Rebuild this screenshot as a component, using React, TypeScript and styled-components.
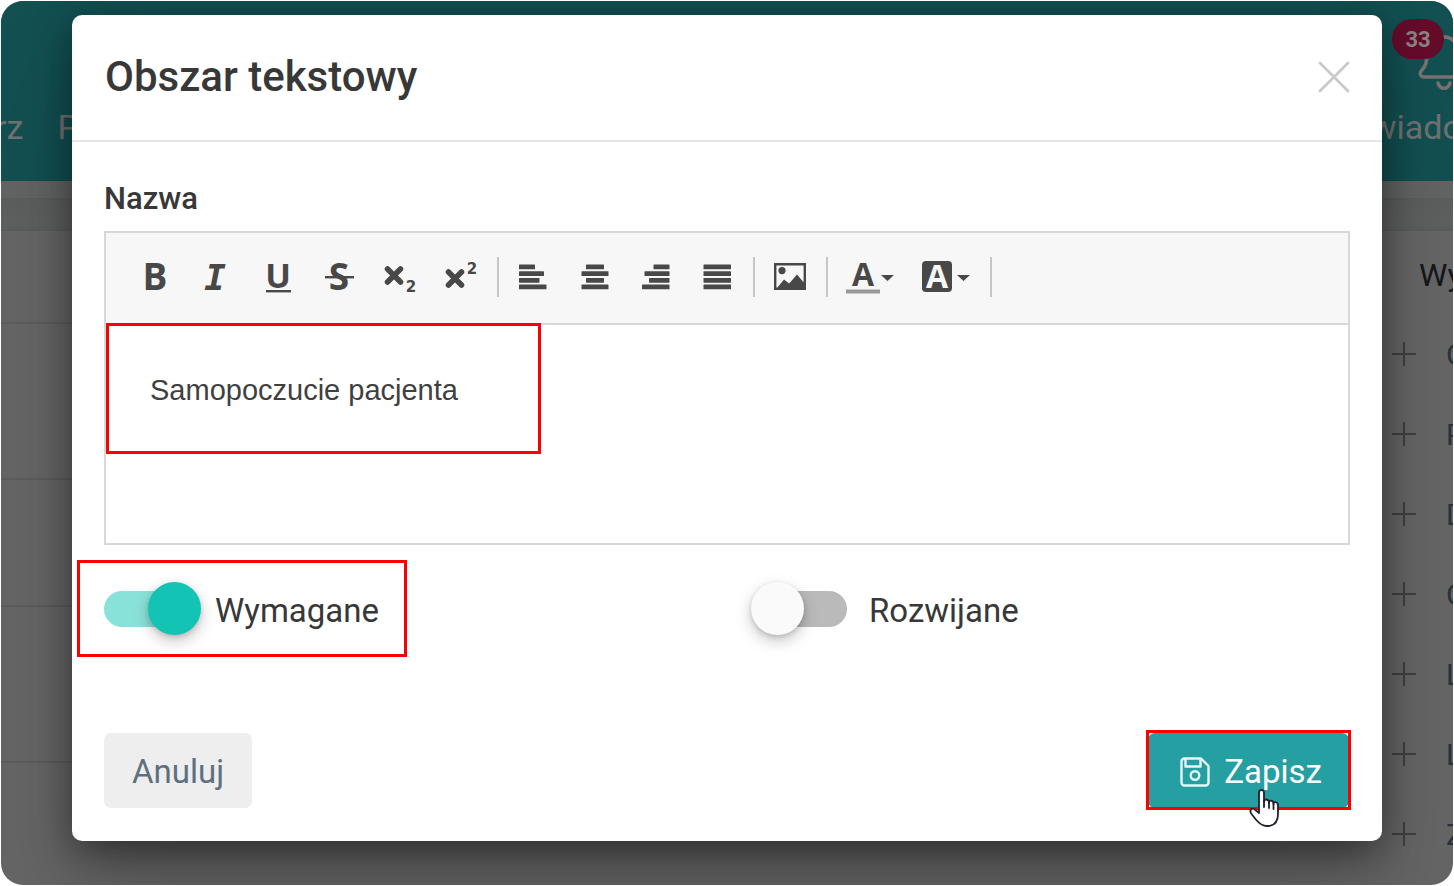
import React from "react";
import styled, { createGlobalStyle, css } from "styled-components";

const ui = `Roboto, "Noto Sans", sans-serif`;

const GlobalStyle = createGlobalStyle`
  *, *::before, *::after { box-sizing: border-box; }
  body { margin: 0; background: #fff; font-family: ${ui}; color: #383838; }
  h1, h2, ul, p { margin: 0; padding: 0; }
  button, textarea { font: inherit; color: inherit; }
`;

const Frame = styled.div`
  display: grid;
  grid-template-columns: minmax(0, 1fr);
  min-height: calc(100vh - 2px);
  margin: 1px;
  border-radius: 22px;
  overflow: hidden;
  background: #666;
`;

/* ---------- dimmed page under the dialog ---------- */

const Page = styled.div`
  grid-area: 1 / 1;
  display: flex;
  flex-direction: column;
  min-width: 0;
`;

const TopBar = styled.header`
  display: flex;
  justify-content: space-between;
  height: 180px;
  background: #135052;
  color: #707372;
  font-size: 34px;
  line-height: 40px;
  overflow: hidden;
`;

const Nav = styled.nav`
  display: flex;
  align-items: flex-end;
  gap: 34px;
  margin-left: -6px;
  padding-bottom: 34px;
`;

const NavLink = styled.a`
  color: inherit;
  text-decoration: none;
  white-space: nowrap;
`;

const Notifications = styled.div`
  display: flex;
  flex-direction: column;
  justify-content: flex-end;
  width: 82px;
  padding-bottom: 34px;
`;

const BellHolder = styled.div`
  position: relative;
  height: 73px;
  margin-bottom: 19px;
  padding-left: 47px;
  svg { display: block; }
`;

const Badge = styled.span`
  position: absolute;
  left: 21px;
  top: 4px;
  width: 52px;
  height: 40px;
  border-radius: 20px;
  background: #650c2b;
  color: #8c8084;
  font-size: 22px;
  font-weight: 700;
  line-height: 42px;
  text-align: center;
`;

const SubBar = styled.div`
  height: 50px;
  border-top: 17px solid #636565;
  background: linear-gradient(#5a5c5c, #5c5f5e 2px, #5e6160 28px, #5b5d5d);
`;

const Columns = styled.div`
  display: flex;
  justify-content: space-between;
  flex: 1;
`;

const Rows = styled.div`
  width: 200px;
`;

const Row = styled.div<{ $size: number }>`
  height: ${(p) => p.$size}px;
  border-bottom: 2px solid #5d5d5d;
`;

const Side = styled.aside`
  width: 61px;
  overflow: hidden;
  white-space: nowrap;
`;

const SideTitle = styled.h2`
  padding: 24px 0 19px 27px;
  font-size: 32px;
  font-weight: 400;
  line-height: 40px;
  color: #15171c;
`;

const SideItem = styled.li`
  display: flex;
  align-items: center;
  gap: 30px;
  height: 80px;
  list-style: none;
  font-size: 30px;
  color: #29313c;
  svg { flex: none; }
`;

/* ---------- dialog ---------- */

const Overlay = styled.div`
  grid-area: 1 / 1;
  z-index: 1;
  padding: 14px 71px 44px;
`;

const Dialog = styled.section`
  display: flex;
  flex-direction: column;
  height: 100%;
  border-radius: 10px;
  background: #fff;
  box-shadow:
    0 28px 40px -18px rgba(0, 0, 0, 0.2),
    0 62px 100px 8px rgba(0, 0, 0, 0.14),
    0 8px 36px 2px rgba(0, 0, 0, 0.34);
`;

const DialogHeader = styled.header`
  display: flex;
  align-items: center;
  justify-content: space-between;
  height: 127px;
  padding: 0 32px 2px 33px;
  border-bottom: 2px solid #e6e6e6;
`;

const Title = styled.h1`
  font-size: 42px;
  font-weight: 500;
  line-height: 50px;
`;

const CloseButton = styled.button`
  display: flex;
  padding: 0;
  border: 0;
  background: none;
`;

const Form = styled.form`
  display: flex;
  flex-direction: column;
  flex: 1;
  padding: 37px 32px 33px;
`;

const FieldLabel = styled.label`
  font-size: 31px;
  font-weight: 500;
  line-height: 40px;
  margin-bottom: 12px;
`;

const Editor = styled.div`
  border: 2px solid #d8d8d8;
`;

const Toolbar = styled.div`
  display: flex;
  align-items: center;
  height: 92px;
  padding: 0 0 2px 18px;
  background: #f7f7f7;
  border-bottom: 2px solid #d8d8d8;
`;

const Group = styled.div<{ $tool: number }>`
  display: flex;
  margin-right: 4px;
  button { width: ${(p) => p.$tool}px; }
`;

const Tool = styled.button`
  display: flex;
  justify-content: center;
  align-items: center;
  height: 48px;
  padding: 0;
  border: 0;
  background: none;
  svg { flex: none; fill: #484848; }
`;

const Divider = styled.span`
  width: 2px;
  height: 40px;
  margin: 0 3px;
  background: #c6c6c6;
`;

const outline = css`
  content: "";
  position: absolute;
  border: 3px solid #f00;
  pointer-events: none;
`;

const EditorBody = styled.div`
  position: relative;
  display: flex;
  &::before {
    ${outline}
    left: 0;
    top: -2px;
    width: 435px;
    height: 131px;
  }
`;

const TextArea = styled.textarea`
  flex: 1;
  height: 218px;
  padding: 43px 44px;
  border: 0;
  outline: 0;
  resize: none;
  background: none;
  color: #404040;
  font-family: "Liberation Sans", Arial, sans-serif;
  font-size: 29px;
  line-height: 44px;
`;

const Options = styled.div`
  display: grid;
  grid-template-columns: 1fr 1fr;
  column-gap: 52px;
  margin-top: 36px;
`;

const SwitchLabel = styled.label<{ $marked?: boolean; $gap: number }>`
  position: relative;
  display: flex;
  align-items: center;
  justify-self: start;
  gap: ${(p) => p.$gap}px;
  font-size: 33px;
  line-height: 56px;
  ${(p) =>
    p.$marked &&
    css`
      &::after {
        ${outline}
        inset: -21px -28px -20px -27px;
      }
    `}
`;

const SwitchText = styled.span`
  padding-top: 3px;
  line-height: 53px;
`;

const Switch = styled.input`
  appearance: none;
  position: relative;
  width: 94px;
  height: 36px;
  margin: 0;
  border-radius: 18px;
  background: #bababa;
  &::before {
    content: "";
    position: absolute;
    left: -2px;
    top: -9px;
    width: 53px;
    height: 53px;
    border-radius: 50%;
    background: #fafafa;
    box-shadow: 0 6px 16px rgba(0, 0, 0, 0.22), 0 2px 5px rgba(0, 0, 0, 0.14);
  }
  &:checked { background: #89e2d9; }
  &:checked::before { left: 44px; background: #13c4b5; }
`;

const Actions = styled.footer`
  display: flex;
  justify-content: space-between;
  margin-top: auto;
`;

const ActionButton = styled.button<{ $primary?: boolean }>`
  display: flex;
  align-items: center;
  justify-content: center;
  gap: 14px;
  height: 75px;
  padding: ${(p) => (p.$primary ? "2px 27px 0 32px" : "2px 28px 0")};
  border: 0;
  border-radius: 7px;
  background: ${(p) => (p.$primary ? "#269fa3" : "#eee")};
  color: ${(p) => (p.$primary ? "#fff" : "#5f7080")};
  font-size: 33px;
  line-height: 40px;
`;

const SaveHolder = styled.div`
  position: relative;
  padding-right: 1px;
  &::after {
    ${outline}
    inset: -3px -1px -2px -2px;
  }
`;

const Pointer = styled.svg`
  position: absolute;
  z-index: 1;
  right: 70px;
  top: 55px;
`;

/* ---------- toolbar drawings ---------- */

type GlyphProps = { size?: number; family?: string; italic?: boolean; y?: number; fill?: string; x?: number; children: string };

const Glyph = ({ size = 37, family = "Open Sans", italic, y = 33, x = 20, fill = "#484848", children }: GlyphProps) => (
  <text x={x} y={y} textAnchor="middle" fontFamily={`"${family}", sans-serif`} fontSize={size} fontWeight="700" fontStyle={italic ? "italic" : "normal"} fill={fill}>
    {children}
  </text>
);

const Icon = ({ w = 40, children }: { w?: number; children: React.ReactNode }) => (
  <svg width={w} height="40" viewBox={`0 0 ${w} 40`} aria-hidden="true">{children}</svg>
);

const Bars = ({ rows }: { rows: [number, number][] }) => (
  <Icon>
    {rows.map(([x, w], i) => (
      <rect key={i} x={x} y={[7.5, 14.2, 20.9, 27.5][i]} width={w} height="4.8" rx="0.6" />
    ))}
  </Icon>
);

const Cross = ({ y }: { y: number }) => (
  <path d={`M8.500 ${y}l13 13M21.500 ${y}l-13 13`} stroke="#484848" strokeWidth="5.500" strokeLinecap="round" />
);

const letters = [
  { name: "Pogrubienie", icon: <Icon><Glyph>B</Glyph></Icon> },
  { name: "Kursywa", icon: <Icon><Glyph family="DejaVu Sans Mono" italic size={36} x={19}>I</Glyph></Icon> },
  { name: "Podkreślenie", icon: <Icon><Glyph size={34} y={31} x={21}>U</Glyph><rect x="9" y="33" width="25" height="2.4" /></Icon> },
  { name: "Przekreślenie", icon: <Icon><Glyph size={37} x={21}>S</Glyph><rect x="7" y="19" width="29" height="2.4" /></Icon> },
  { name: "Indeks dolny", icon: <Icon><Cross y={12} /><Glyph family="DejaVu Sans" size={15} x={32} y={35}>2</Glyph></Icon> },
  { name: "Indeks górny", icon: <Icon><Cross y={15} /><Glyph family="DejaVu Sans" size={15} x={32} y={17}>2</Glyph></Icon> },
];

const aligns: { name: string; rows: [number, number][] }[] = [
  { name: "Wyrównaj do lewej", rows: [[6, 16], [6, 25], [6, 20.5], [6, 27.5]] },
  { name: "Wyśrodkuj", rows: [[12, 18], [7.5, 27], [12, 18], [7.5, 27]] },
  { name: "Wyrównaj do prawej", rows: [[18.5, 16], [9.5, 25], [14, 20.5], [7, 27.5]] },
  { name: "Wyjustuj", rows: [[7.5, 27.5], [7.5, 27.5], [7.5, 27.5], [7.5, 27.5]] },
];

const sideItems = ["O", "P", "D", "O", "L", "L", "Z"];

export default function App() {
  return (
    <>
      <GlobalStyle />
      <Frame>
        <Page>
          <TopBar>
            <Nav>
              <NavLink href="#rz">rz</NavLink>
              <NavLink href="#p">P</NavLink>
            </Nav>
            <Notifications>
              <BellHolder>
                <svg width="52" height="76" viewBox="0 0 52 76" fill="none" stroke="#777371" strokeWidth="3.6" strokeLinecap="round">
                  <path d="M24 22C34 21 40 28 41 38C42 50 49 55 49 60C49 62 48 62 46 62H6C2 62 1 58 4 55C8 51 9 47 9 40C9 30 14 23 24 22Z" />
                  <path d="M20 68C22 75 30 75 32 68" />
                </svg>
                <Badge>33</Badge>
              </BellHolder>
              <NavLink href="#notifications">wiado</NavLink>
            </Notifications>
          </TopBar>
          <SubBar />
          <Columns>
            <Rows>
              {[93, 156, 127, 156].map((size, i) => <Row key={i} $size={size} />)}
            </Rows>
            <Side>
              <SideTitle>Wy</SideTitle>
              <ul>
                {sideItems.map((label, i) => (
                  <SideItem key={i}>
                    <svg width="24" height="24" viewBox="0 0 24 24" stroke="#3f4041" strokeWidth="2"><path d="M0 12h24M12 0v24" /></svg>
                    {label}
                  </SideItem>
                ))}
              </ul>
            </Side>
          </Columns>
        </Page>

        <Overlay>
          <Dialog role="dialog" aria-labelledby="dialog-title">
            <DialogHeader>
              <Title id="dialog-title">Obszar tekstowy</Title>
              <CloseButton type="button" aria-label="Zamknij">
                <svg width="32" height="32" viewBox="0 0 32 32" stroke="#c9c9c9" strokeWidth="2.8" strokeLinecap="round"><path d="M2 2l28 28M30 2L2 30" /></svg>
              </CloseButton>
            </DialogHeader>

            <Form onSubmit={(e) => e.preventDefault()}>
              <FieldLabel htmlFor="name">Nazwa</FieldLabel>
              <Editor>
                <Toolbar role="toolbar">
                  <Group $tool={61}>
                    {letters.map((l) => <Tool key={l.name} type="button" aria-label={l.name}>{l.icon}</Tool>)}
                  </Group>
                  <Divider />
                  <Group $tool={61}>
                    {aligns.map((a) => <Tool key={a.name} type="button" aria-label={a.name}><Bars rows={a.rows} /></Tool>)}
                  </Group>
                  <Divider />
                  <Group $tool={61}>
                    <Tool type="button" aria-label="Obrazek">
                      <Icon>
                        <path fillRule="evenodd" d="M5 6h32v27H5zM7.4 8.4v22.2h1l6.600-8.200 5.200 4.200 7.800-9.200 6.600 7.800V8.400z" />
                        <circle cx="13" cy="13.600" r="3.600" />
                      </Icon>
                    </Tool>
                  </Group>
                  <Divider />
                  <Group $tool={76}>
                    <Tool type="button" aria-label="Kolor tekstu">
                      <Icon w={50}>
                        <Glyph size={32} x={19} y={29}>A</Glyph>
                        <rect x="2" y="32.500" width="34" height="4" fill="#999" />
                        <path d="M37 18h13l-6.500 6z" />
                      </Icon>
                    </Tool>
                    <Tool type="button" aria-label="Kolor tła">
                      <Icon w={52}>
                        <rect x="3" y="4" width="30" height="31" rx="4" />
                        <Glyph size={32} x={18} y={31} fill="#f7f7f7">A</Glyph>
                        <path d="M38 18h13l-6.500 6z" />
                      </Icon>
                    </Tool>
                  </Group>
                  <Divider />
                </Toolbar>
                <EditorBody>
                  <TextArea id="name" defaultValue="Samopoczucie pacjenta" spellCheck={false} />
                </EditorBody>
              </Editor>

              <Options>
                <SwitchLabel $marked $gap={17}><Switch type="checkbox" defaultChecked /><SwitchText>Wymagane</SwitchText></SwitchLabel>
                <SwitchLabel $gap={22}><Switch type="checkbox" /><SwitchText>Rozwijane</SwitchText></SwitchLabel>
              </Options>

              <Actions>
                <ActionButton type="button">Anuluj</ActionButton>
                <SaveHolder>
                  <ActionButton type="submit" $primary>
                    <svg width="30" height="30" viewBox="0 0 30 30" fill="none" stroke="#e4f8f6" strokeWidth="2.400" strokeLinejoin="round">
                      <path d="M4 1.500H21L28.500 9V25.500a3 3 0 0 1-3 3H4.500a3 3 0 0 1-3-3V4.500a3 3 0 0 1 3-3Z" />
                      <path d="M5.500 2V9.500H20.500V2" />
                      <circle cx="15" cy="18.500" r="4.300" />
                    </svg>
                    Zapisz
                  </ActionButton>
                  <Pointer width="31" height="40" viewBox="0 0 31 40" fill="#fff" stroke="#20202c" strokeWidth="1.800" strokeLinejoin="round" strokeLinecap="round">
                    <path d="M10 25V5C10 0.800 15 0.800 15 5V14C15 10.500 20 10.500 20 15C20 11.500 24.500 12 24.500 16C24.500 13 29 13.500 29 17.500V26C29 34 25 38 18 38C12 38 9 34 6.500 31L2.500 26C-0.500 22 3.500 19 6.500 22Z" />
                    <path d="M15 13V19M20 15V20M24.500 16V21" fill="none" />
                  </Pointer>
                </SaveHolder>
              </Actions>
            </Form>
          </Dialog>
        </Overlay>
      </Frame>
    </>
  );
}
